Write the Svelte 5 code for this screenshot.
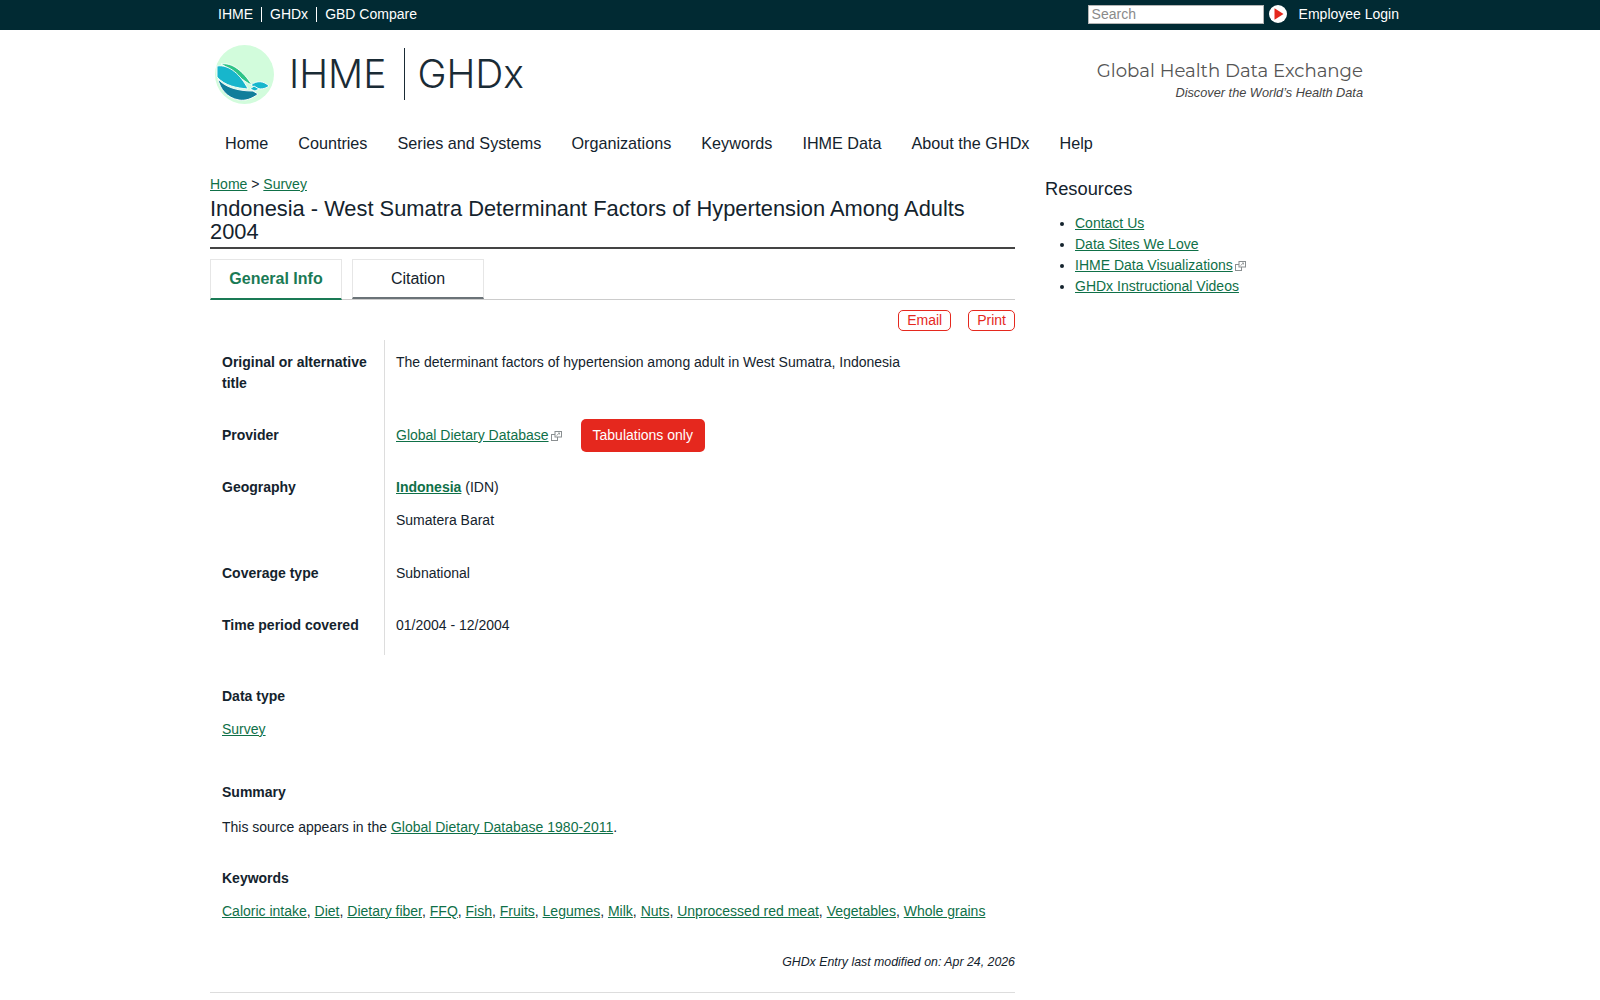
<script lang="ts">
	const topLinks = ['IHME', 'GHDx', 'GBD Compare'];
	const navItems = ['Home', 'Countries', 'Series and Systems', 'Organizations', 'Keywords', 'IHME Data', 'About the GHDx', 'Help'];
	const keywords = ['Caloric intake', 'Diet', 'Dietary fiber', 'FFQ', 'Fish', 'Fruits', 'Legumes', 'Milk', 'Nuts', 'Unprocessed red meat', 'Vegetables', 'Whole grains'];
</script>

{#snippet extIcon()}
	<svg class="ext" viewBox="0 0 11 10" fill="none" stroke="#8a8f91" stroke-width="1">
		<rect x="0.5" y="3.5" width="6" height="6"></rect>
		<rect x="4" y="0.5" width="6.5" height="5.5" fill="#fff"></rect>
		<path d="M5.5 4.5 L8.5 2 M7 2 h1.5 v1.5" stroke-width="0.8"></path>
	</svg>
{/snippet}

<div class="topbar">
	<div class="topbar-inner">
		<ul class="top-links">
			{#each topLinks as link}
				<li>{link}</li>
			{/each}
		</ul>
		<div class="top-right">
			<input class="search" type="text" placeholder="Search" />
			<svg class="go" viewBox="0 0 18 18">
				<circle cx="9" cy="9" r="9" fill="#fff"></circle>
				<path d="M5.5 3.2 L14.5 9 L5.5 14.8 Z" fill="#e5281e"></path>
			</svg>
			<span class="login">Employee Login</span>
		</div>
	</div>
</div>

<div class="page">
	<header class="masthead">
		<div class="brand">
			<svg class="logo" viewBox="0 0 59 59">
				<circle cx="29.5" cy="29.5" r="29.5" fill="#d2fcdc"></circle>
				<g stroke="#fff" stroke-width="0.9" stroke-linejoin="round">
					<path d="M3 34 C10 42 22 46 38 46 L43 49 C37 54 30 56 24 55 C12 53 5 44 3 34 Z" fill="#117e9b"></path>
					<path d="M6 19 C17 17 28 26 37 40 C28 37 18 25 6 19 Z" fill="#2fc487"></path>
					<path d="M2 21 C14 19 26 30 33 44 C22 43 10 41 2 32 Z" fill="#17b6cc"></path>
					<path d="M36 40 C42 35 49 36 54 41 C49 45 42 45 36 40 Z" fill="#17b6cc"></path>
					<path d="M35 44 L39 41 L44 44 L40 46 Z" fill="#17b6cc"></path>
				</g>
			</svg>
			<span class="brand-name">IHME</span>
			<span class="brand-rule"></span>
			<span class="brand-name">GHDx</span>
		</div>
		<div class="tagline">
			<div class="tag-title">Global Health Data Exchange</div>
			<div class="tag-sub">Discover the World’s Health Data</div>
		</div>
	</header>

	<nav class="mainnav">
		{#each navItems as item}
			<span class="nav-item">{item}</span>
		{/each}
	</nav>

	<div class="columns">
		<main class="content">
			<div class="crumbs"><a href="#home">Home</a> &gt; <a href="#survey">Survey</a></div>
			<h1>Indonesia - West Sumatra Determinant Factors of Hypertension Among Adults 2004</h1>

			<div class="tabs">
				<div class="tab active">General Info</div>
				<div class="tab">Citation</div>
			</div>

			<div class="actions">
				<span class="pill">Email</span>
				<span class="pill">Print</span>
			</div>

			<div class="facts">
				<div class="fact-label first">Original or alternative title</div>
				<div class="fact-value">The determinant factors of hypertension among adult in West Sumatra, Indonesia</div>

				<div class="fact-label provider-label">Provider</div>
				<div class="fact-value provider">
					<span><a href="#gdd">Global Dietary Database</a>{@render extIcon()}</span>
					<span class="badge">Tabulations only</span>
				</div>

				<div class="fact-label">Geography</div>
				<div class="fact-value geo">
					<div><a href="#idn"><b>Indonesia</b></a> (IDN)</div>
					<div class="sub-geo">Sumatera Barat</div>
				</div>

				<div class="fact-label">Coverage type</div>
				<div class="fact-value coverage">Subnational</div>

				<div class="fact-label">Time period covered</div>
				<div class="fact-value last">01/2004 - 12/2004</div>
			</div>

			<section class="block datatype">
				<h3>Data type</h3>
				<p><a href="#survey">Survey</a></p>
			</section>

			<section class="block summary">
				<h3>Summary</h3>
				<p>This source appears in the <a href="#gdd">Global Dietary Database 1980-2011</a>.</p>
			</section>

			<section class="block keywords">
				<h3>Keywords</h3>
				<p>
					{#each keywords as kw, i}<a href="#kw">{kw}</a>{i < keywords.length - 1 ? ', ' : ''}{/each}
				</p>
			</section>

			<div class="modified">GHDx Entry last modified on: Apr 24, 2026</div>
			<hr />
		</main>

		<aside class="sidebar">
			<h2>Resources</h2>
			<ul>
				<li><a href="#contact">Contact Us</a></li>
				<li><a href="#sites">Data Sites We Love</a></li>
				<li><a href="#viz">IHME Data Visualizations</a>{@render extIcon()}</li>
				<li><a href="#videos">GHDx Instructional Videos</a></li>
			</ul>
		</aside>
	</div>
</div>

<style>
	:global(body) {
		margin: 0;
		background: #fff;
		color: #14232d;
		font-family: 'Liberation Sans', Arial, sans-serif;
		font-size: 14px;
	}

	a {
		color: #0f7048;
		text-decoration: underline;
	}

	/* top bar */
	.topbar {
		background: #012a33;
		height: 30px;
	}

	.topbar-inner {
		width: 1190px;
		margin-left: 210px;
		display: flex;
		justify-content: space-between;
		align-items: center;
		height: 28px;
		color: #fff;
	}

	.top-links {
		list-style: none;
		margin: 0;
		padding: 0;
		display: flex;
	}

	.top-links li {
		padding: 0 8px;
		line-height: 15px;
		border-left: 1px solid #fff;
	}

	.top-links li:first-child {
		border-left: none;
	}

	.top-right {
		display: flex;
		align-items: center;
	}

	.search {
		box-sizing: border-box;
		width: 176px;
		height: 19px;
		border: 1px solid #b5b5b5;
		padding: 0 3px;
		font: 14px 'Liberation Sans', Arial, sans-serif;
		background: #fff;
	}

	.search::placeholder {
		color: #8a8a8a;
	}

	.go {
		width: 18px;
		height: 18px;
		margin-left: 5px;
	}

	.login {
		margin-left: 12px;
		margin-right: 1px;
	}

	/* header */
	.page {
		width: 1153px;
		margin-left: 210px;
	}

	.masthead {
		display: flex;
		justify-content: space-between;
		align-items: flex-start;
		height: 95px;
	}

	.brand {
		display: flex;
		align-items: center;
		margin-top: 15px;
		margin-left: 5px;
		height: 59px;
	}

	.logo {
		width: 59px;
		height: 59px;
		margin-right: 15px;
	}

	.brand-name {
		font-family: 'Inter', sans-serif;
		font-weight: 300;
		font-size: 39px;
		line-height: 59px;
		margin-top: -2px;
		color: #1a2b35;
	}

	.brand-rule {
		width: 1px;
		height: 52px;
		background: #1a2b35;
		margin: -2px 12px 0 18px;
	}

	.tagline {
		margin-top: 30px;
		text-align: right;
	}

	.tag-title {
		font-family: 'Montserrat', 'Open Sans', sans-serif;
		font-size: 18.15px;
		line-height: 22px;
		color: #555;
	}

	.tag-sub {
		font-size: 12.75px;
		font-style: italic;
		color: #444;
		line-height: 22px;
	}

	/* nav */
	.mainnav {
		display: flex;
		height: 36px;
		align-items: center;
		padding-bottom: 13px;
	}

	.nav-item {
		padding: 0 15px;
		font-size: 16.2px;
	}

	/* columns */
	.columns {
		display: grid;
		grid-template-columns: 805px 318px;
		gap: 30px;
	}

	.crumbs {
		line-height: 20px;
	}

	h1 {
		margin: 3px 0 0;
		font-size: 21.85px;
		font-weight: 400;
		line-height: 23px;
		padding-bottom: 4px;
		border-bottom: 2px solid #444;
	}

	.tabs {
		display: flex;
		gap: 10px;
		margin-top: 10px;
		border-bottom: 1px solid #ccc;
		height: 40px;
	}

	.tab {
		box-sizing: border-box;
		width: 132px;
		height: 40px;
		border: 1px solid #e6e6e6;
		border-bottom: 2px solid #6b7378;
		text-align: center;
		line-height: 38px;
		font-size: 16px;
	}

	.tab.active {
		height: 41px;
		color: #1a7a55;
		font-weight: 700;
		border-bottom-color: #1a7a55;
	}

	.actions {
		display: flex;
		justify-content: flex-end;
		gap: 17px;
		margin-top: 10px;
	}

	.pill {
		border: 1px solid #e5281e;
		border-radius: 5px;
		color: #e5281e;
		padding: 0 8px;
		line-height: 19px;
	}

	/* facts table */
	.facts {
		display: grid;
		grid-template-columns: 174px 1fr;
		margin-top: 9px;
	}

	.fact-label {
		font-weight: 700;
		padding: 12px 12px 0;
		line-height: 21px;
	}

	.fact-label.first {
		padding-bottom: 17px;
	}

	.fact-label.provider-label {
		padding-top: 14px;
	}

	.fact-value {
		border-left: 1px solid #ddd;
		padding: 12px 11px 0;
		line-height: 21px;
	}

	.provider {
		display: flex;
		align-items: center;
		gap: 19px;
		padding-top: 8px;
		padding-bottom: 13px;
	}

	.geo {
		padding-bottom: 20px;
	}

	.coverage {
		padding-bottom: 19px;
	}

	.last {
		padding-bottom: 19px;
	}

	.badge {
		background: #e5281e;
		color: #fff;
		border-radius: 5px;
		padding: 0 12px;
		line-height: 33px;
	}

	.sub-geo {
		margin-top: 12px;
	}

	.ext {
		width: 11px;
		height: 10px;
		margin-left: 2px;
		vertical-align: -1px;
	}

	/* blocks */
	.block {
		padding: 0 12px;
	}

	h3 {
		margin: 0;
		font-size: 14px;
		line-height: 21px;
	}

	.block p {
		margin: 12px 0 0;
		line-height: 21px;
	}

	.datatype {
		margin-top: 31px;
	}

	.summary {
		margin-top: 42px;
	}

	.summary p {
		margin-top: 14px;
	}

	.keywords {
		margin-top: 30px;
	}

	.modified {
		margin-top: 30px;
		text-align: right;
		font-size: 12.35px;
		font-style: italic;
		line-height: 20px;
	}

	hr {
		border: none;
		border-top: 1px solid #ddd;
		margin: 20px 0 0;
	}

	/* sidebar */
	.sidebar h2 {
		margin: 3px 0 0;
		font-size: 18.3px;
		font-weight: 400;
		line-height: 24px;
	}

	.sidebar ul {
		margin: 12px 0 0;
		padding-left: 30px;
	}

	.sidebar li {
		line-height: 21px;
	}
</style>
